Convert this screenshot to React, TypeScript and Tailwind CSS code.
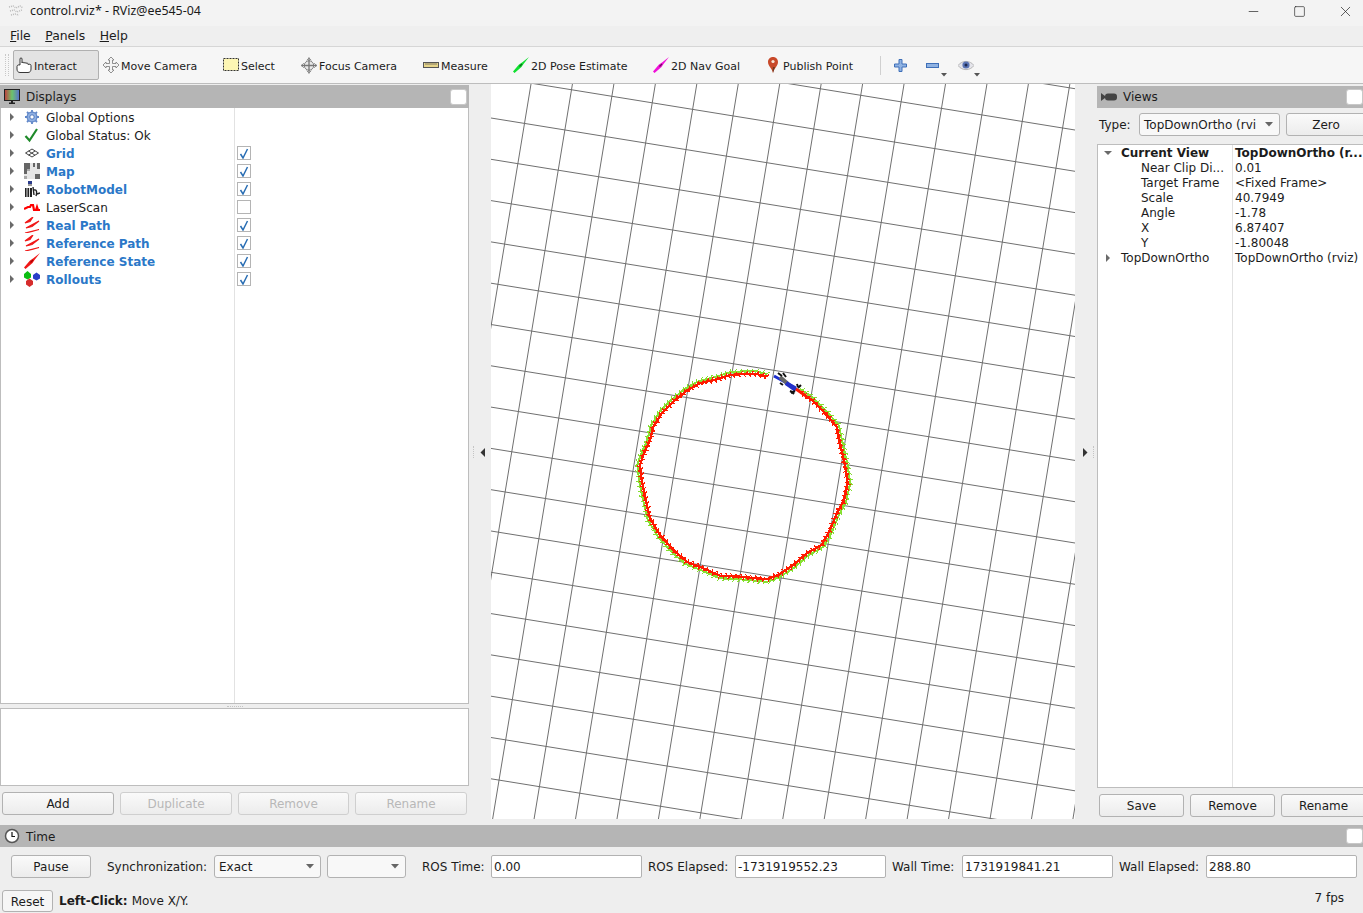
import type { ReactNode } from 'react';
import { Minus, Square, X } from 'lucide-react';

const FONT = '"DejaVu Sans", sans-serif';

// traced from the path in the viewport, in screen pixels relative to the viewport
const toView = (x: number, y: number): [number, number] => [x / 3 + 620 - 491, y / 3 + 350 - 84];
const PATH_POINTS: [number, number][] = (
  [
    [440, 80], [410, 72], [370, 72], [330, 75], [290, 88], [240, 100], [200, 122], [160, 155], [125, 190],
    [100, 230], [90, 270], [70, 315], [60, 345], [65, 390], [75, 440], [90, 505], [120, 555], [160, 600],
    [200, 635], [250, 655], [300, 677], [360, 680], [440, 688], [475, 675], [520, 645], [560, 610], [605, 585],
    [630, 540], [650, 490], [670, 455], [683, 400], [675, 345], [662, 290], [650, 230], [615, 190], [575, 150],
    [535, 122],
  ] as [number, number][]
).map(([x, y]) => toView(x, y));

const CENTER: [number, number] = [252, 392];

function ticks(points: [number, number][], size: number, offset: number) {
  let d = '';
  let n = 0;
  for (let i = 0; i < points.length - 1; i++) {
    const [ax, ay] = points[i];
    const [bx, by] = points[i + 1];
    const len = Math.hypot(bx - ax, by - ay);
    const steps = Math.max(1, Math.round(len / 2.5));
    for (let s = 0; s < steps; s++) {
      const t = s / steps;
      let x = ax + (bx - ax) * t;
      let y = ay + (by - ay) * t;
      const rx = x - CENTER[0];
      const ry = y - CENTER[1];
      const r = Math.hypot(rx, ry);
      x += (rx / r) * offset;
      y += (ry / r) * offset;
      const nx = (-(by - ay) / len) * size;
      const ny = ((bx - ax) / len) * size;
      const dir = n % 2 === 0 ? 1 : -1;
      const tx = ((bx - ax) / len) * 2;
      const ty = ((by - ay) / len) * 2;
      d += `M${x.toFixed(1)} ${y.toFixed(1)}L${(x + nx * dir - tx).toFixed(1)} ${(y + ny * dir - ty).toFixed(1)}`;
      n++;
    }
  }
  return d;
}

function line(points: [number, number][], offset: number) {
  return points
    .map(([x, y], i) => {
      const rx = x - CENTER[0];
      const ry = y - CENTER[1];
      const r = Math.hypot(rx, ry);
      return `${i ? 'L' : 'M'}${(x + (rx / r) * offset).toFixed(1)} ${(y + (ry / r) * offset).toFixed(1)}`;
    })
    .join('');
}

function Viewport() {
  const W = 584;
  const H = 735;
  const across = [];
  const down = [];
  for (let k = -3; k < 26; k++) {
    const y0 = 34 + k * 41.3;
    across.push(<line key={k} x1={0} y1={y0} x2={W} y2={y0 + W * 0.162} />);
  }
  for (let k = -3; k < 22; k++) {
    const x0 = 40 + k * 41.45;
    down.push(<line key={k} x1={x0} y1={0} x2={x0 - H * 0.165} y2={H} />);
  }
  return (
    <div className="w-[584px] h-[735px] bg-white shrink-0 overflow-hidden">
      <svg width={W} height={H} viewBox={`0 0 ${W} ${H}`} className="block">
        <g stroke="#707070" strokeWidth={1} fill="none">
          {across}
          {down}
        </g>
        <path d={line(PATH_POINTS, 2.6)} stroke="#8ae234" strokeWidth={2} fill="none" shapeRendering="crispEdges" />
        <path d={ticks(PATH_POINTS, 2.4, 3)} stroke="#84de30" strokeWidth={1} fill="none" shapeRendering="crispEdges" />
        <path d={line(PATH_POINTS, 0)} stroke="#ff1a00" strokeWidth={2.4} fill="none" shapeRendering="crispEdges" />
        <path d={ticks(PATH_POINTS, 2.8, 0)} stroke="#ff1a00" strokeWidth={1.2} fill="none" shapeRendering="crispEdges" />
        {/* robot */}
        <g transform="translate(129 266)">
          <path d="M154 26L176 38" stroke="#1d2fd0" strokeWidth={3} />
          <path d="M160 27L168 34" stroke="#666" strokeWidth={4} />
          <path d="M166 33L176 40" stroke="#2430c8" strokeWidth={4.5} />
          <path d="M158 23L162 26M163 23L166 27M177 34L178 37M170 41L174 43M172 42L174 44M160 33L163 35" stroke="#111" strokeWidth={2} />
          <path d="M181 35L178 38M171 43L175 41" stroke="#111" strokeWidth={2} />
          <path d="M176 39L186 46" stroke="#ff1a00" strokeWidth={3} />
        </g>
      </svg>
    </div>
  );
}

function Arrow({ down }: { down?: boolean }) {
  return (
    <svg width="8" height="8" viewBox="0 0 8 8" className="shrink-0">
      {down ? <path d="M0 2H8L4 6Z" fill="#6a6a6a" /> : <path d="M2 0V8L6 4Z" fill="#6a6a6a" />}
    </svg>
  );
}

function GearIcon() {
  return (
    <svg width="16" height="16" viewBox="0 0 16 16">
      <circle cx="8" cy="8" r="5" fill="#8fb0e2" stroke="#4f78c0" strokeWidth="1" />
      <circle cx="8" cy="8" r="2.2" fill="#fff" stroke="#4f78c0" />
      <path d="M8 1V3M8 13V15M1 8H3M13 8H15M3 3L4.5 4.5M11.5 11.5L13 13M3 13L4.5 11.5M11.5 4.5L13 3" stroke="#5f86c8" strokeWidth="1.8" />
    </svg>
  );
}

function CheckIcon() {
  return (
    <svg width="16" height="16" viewBox="0 0 16 16">
      <path d="M1.5 9L5.5 13.5L13 2" stroke="#1f8a2a" strokeWidth="2.2" fill="none" />
    </svg>
  );
}

function GridIcon() {
  return (
    <svg width="16" height="16" viewBox="0 0 16 16">
      <path d="M1.5 8L8 4L14.5 8L8 12ZM4.5 6L11 10.2M11 6L4.5 10.2" stroke="#444" strokeWidth="1" fill="none" />
    </svg>
  );
}

function MapIcon() {
  return (
    <svg width="16" height="16" viewBox="0 0 16 16">
      <rect width="16" height="16" fill="#e6e6e6" />
      <path d="M0 0H6V6H3V11H0ZM9 0H11V4H9ZM13 0H16V6H13ZM11 11H16V16H11Z" fill="#666" />
      <path d="M3 6H6V8H3ZM0 13H3V16H0Z" fill="#a8a8a8" />
    </svg>
  );
}

function RobotIcon() {
  return (
    <svg width="16" height="16" viewBox="0 0 16 16">
      <path d="M4 0H8V3H4Z" fill="#2b3c8c" />
      <path d="M4 3H8V5H4Z" fill="#999" />
      <path d="M1 7H8V16H1Z" fill="#222" />
      <path d="M3 7V16M5.5 7V16" stroke="#ddd" />
      <path d="M9 6L10 14M10 9C13 8 13 12 12 15M13 13L16 12" stroke="#222" strokeWidth="1.4" fill="none" />
    </svg>
  );
}

function LaserIcon() {
  return (
    <svg width="16" height="16" viewBox="0 0 16 16">
      <path d="M0 10L4 8H6L7 6H9L10 11H12L13 8L14 11H16" stroke="#f00" strokeWidth="2.2" fill="none" />
    </svg>
  );
}

function PathIcon() {
  return (
    <svg width="16" height="16" viewBox="0 0 16 16">
      <path d="M1 6L9 0L6 4.5ZM2 11L15 4L8 9.5ZM1 16L15 12.5L8 14.5Z" fill="#f01818" stroke="#f01818" strokeWidth="1.2" />
    </svg>
  );
}

function PoseIcon({ color = '#f01818', dark = '#a00' }: { color?: string; dark?: string }) {
  return (
    <svg width="16" height="16" viewBox="0 0 16 16">
      <path d="M0 14.5L6 7.5L9 5.5L16 0L10.5 7L8.5 10L1.5 16Z" fill={color} />
      <path d="M6.5 9.5L9 7" stroke={dark} strokeWidth="1.2" />
    </svg>
  );
}

function RolloutsIcon() {
  return (
    <svg width="16" height="16" viewBox="0 0 16 16">
      <path d="M0 3L3.5 0L7 3V6.5L3.5 8.5L0 6.5Z" fill="#0bbd12" />
      <path d="M9 4L12.5 1.5L16 4V7.5L12.5 9.5L9 7.5Z" fill="#2a3fc8" />
      <path d="M2 10L5.5 7.5L9 10V13.5L5.5 16L2 13.5Z" fill="#d62c2c" />
    </svg>
  );
}

function MonitorIcon() {
  return (
    <svg width="16" height="16" viewBox="0 0 16 16">
      <defs>
        <linearGradient id="scr" x1="0" y1="0" x2="1" y2="0">
          <stop offset="0" stopColor="#c43c3c" />
          <stop offset="0.5" stopColor="#6cc46c" />
          <stop offset="1" stopColor="#5a6fd0" />
        </linearGradient>
      </defs>
      <rect x="0.5" y="0.5" width="15" height="11" fill="url(#scr)" stroke="#222" />
      <path d="M5 15H11V13.5H9V12H7V13.5H5Z" fill="#222" />
    </svg>
  );
}

function ClockIcon() {
  return (
    <svg width="16" height="16" viewBox="0 0 16 16">
      <circle cx="8" cy="8" r="6.5" fill="#fff" stroke="#555" strokeWidth="1.5" />
      <path d="M8 4V8.5H11" stroke="#111" strokeWidth="1.2" fill="none" />
    </svg>
  );
}

function CameraIcon() {
  return (
    <svg width="16" height="12" viewBox="0 0 16 12">
      <path d="M0 2L4 5V7L0 10Z" fill="#444" />
      <rect x="4" y="2.5" width="12" height="7" rx="3" fill="#444" />
    </svg>
  );
}

function HandIcon() {
  return (
    <svg width="16" height="16" viewBox="0 0 16 16">
      <path d="M4 8V2C4 0.5 6 0.5 6 2V6C6 5 8 5 8 6.2C8 5.3 10 5.3 10 6.5C10 5.8 12 5.8 12 7V7.5C13 7 15 7 15 8.5V12C15 14 14 15.5 12 15.5H4C2 15.5 1 14 1 12V9.5C1 8.2 2.5 7.5 4 8Z" fill="#fff" stroke="#222" strokeWidth="0.9" />
    </svg>
  );
}

function MoveIcon() {
  return (
    <svg width="16" height="16" viewBox="0 0 16 16">
      <path d="M8 0L11 3H9.5V6.5H13V5L16 8L13 11V9.5H9.5V13H11L8 16L5 13H6.5V9.5H3V11L0 8L3 5V6.5H6.5V3H5Z" fill="#f4f4f4" stroke="#777" strokeWidth="0.8" />
    </svg>
  );
}

function SelectIcon() {
  return (
    <svg width="16" height="14" viewBox="0 0 16 14">
      <rect x="0.5" y="0.5" width="15" height="12" fill="#fdf6b4" stroke="#333" strokeDasharray="2 1" />
    </svg>
  );
}

function FocusIcon() {
  return (
    <svg width="17" height="17" viewBox="0 0 17 17">
      <circle cx="8.5" cy="8.5" r="5" fill="#e8e8e8" stroke="#777" />
      <path d="M8.5 0V17M0 8.5H17" stroke="#777" strokeWidth="1.4" />
      <path d="M6 3L8.5 0.5L11 3M6 14L8.5 16.5L11 14M3 6L0.5 8.5L3 11M14 6L16.5 8.5L14 11" stroke="#888" fill="none" />
    </svg>
  );
}

function MeasureIcon() {
  return (
    <svg width="16" height="8" viewBox="0 0 16 8">
      <rect x="0.5" y="1.5" width="15" height="5" fill="#e6d58a" stroke="#555" />
      <path d="M3 2V4M5 2V4M7 2V4M9 2V4M11 2V4M13 2V4" stroke="#555" strokeWidth="0.7" />
    </svg>
  );
}

function PinIcon() {
  return (
    <svg width="16" height="16" viewBox="0 0 16 16">
      <path d="M8 0C5 0 3 2.2 3 5C3 9 7 11 8 16C9 11 13 9 13 5C13 2.2 11 0 8 0Z" fill="#c8492a" />
      <path d="M8 10C7.5 12 7.5 14 8 16C8.5 14 9.5 12 10 10Z" fill="#6e3a20" />
      <circle cx="8" cy="4.5" r="1.6" fill="#f6e6d8" />
    </svg>
  );
}

function ToolItem({ icon, label, className }: { icon: ReactNode; label: string; className: string }) {
  return (
    <div className={`flex items-center gap-[2px] h-[30px] shrink-0 ${className}`}>
      <span className="w-[16px] h-[18px] flex items-center justify-center shrink-0">{icon}</span>
      <span className="text-[11px] text-[#1c1c1c] pt-[4px]">{label}</span>
    </div>
  );
}

function Toolbar() {
  return (
    <div className="h-[38px] shrink-0 flex items-center bg-[#f6f6f6] border-y border-t-[#d6d6d6] border-b-[#bdbdbd] pl-[5px]">
      <div className="w-[4px] h-[22px] mr-[4px] border-x border-dotted border-[#c8c8c8]" />
      <ToolItem
        icon={<HandIcon />}
        label="Interact"
        className="w-[86px] pl-[2px] bg-[#e3e3e3] border border-[#b0b0b0] rounded-[2px]"
      />
      <ToolItem icon={<MoveIcon />} label="Move Camera" className="w-[120px] pl-[4px]" />
      <ToolItem icon={<SelectIcon />} label="Select" className="w-[78px] pl-[4px]" />
      <ToolItem icon={<FocusIcon />} label="Focus Camera" className="w-[122px] pl-[4px]" />
      <ToolItem icon={<MeasureIcon />} label="Measure" className="w-[90px] pl-[4px]" />
      <ToolItem icon={<PoseIcon color="#10e030" dark="#0a6a1a" />} label="2D Pose Estimate" className="w-[140px] pl-[4px]" />
      <ToolItem icon={<PoseIcon color="#f010d8" dark="#700a60" />} label="2D Nav Goal" className="w-[115px] pl-[4px]" />
      <ToolItem icon={<PinIcon />} label="Publish Point" className="w-[116px] pl-[1px]" />
      <div className="w-px h-[19px] bg-[#d0d0d0] shrink-0" />
      <div className="relative w-[32px] h-[30px] shrink-0 flex items-center justify-center ml-[3px]">
        <svg width="13" height="13" viewBox="0 0 13 13">
          <path d="M5 0.5H8V5H12.5V8H8V12.5H5V8H0.5V5H5Z" fill="#8fb2e2" stroke="#3e6fb8" />
        </svg>
      </div>
      <div className="relative w-[33px] h-[30px] shrink-0 flex items-center justify-center">
        <svg width="13" height="5" viewBox="0 0 13 5">
          <rect x="0.5" y="0.5" width="12" height="4" fill="#8fb2e2" stroke="#3e6fb8" />
        </svg>
        <span className="absolute right-[2px] bottom-[3px]">
          <svg width="6" height="4" viewBox="0 0 6 4"><path d="M0 0H6L3 3.5Z" fill="#555" /></svg>
        </span>
      </div>
      <div className="relative w-[34px] h-[30px] shrink-0 flex items-center justify-center">
        <svg width="16" height="11" viewBox="0 0 16 11">
          <path d="M0 5.5C4 0 12 0 16 5.5C12 11 4 11 0 5.5Z" fill="#e4e4ea" stroke="#aaa" strokeWidth="0.8" />
          <circle cx="8" cy="5" r="3.6" fill="#5a74b4" />
          <circle cx="8" cy="5" r="1.5" fill="#1f2a50" />
        </svg>
        <span className="absolute right-[3px] bottom-[3px]">
          <svg width="6" height="4" viewBox="0 0 6 4"><path d="M0 0H6L3 3.5Z" fill="#555" /></svg>
        </span>
      </div>
    </div>
  );
}

function PanelHeader({ icon, title }: { icon: ReactNode; title: string }) {
  return (
    <div className="h-[23px] bg-[#b5b5b5] flex items-center pl-[4px] pr-[2px] shrink-0">
      <span className="w-[16px] flex items-center justify-center shrink-0">{icon}</span>
      <span className="ml-[6px] text-[12px] pt-px text-[#1c1c1c]">{title}</span>
      <span className="ml-auto w-[17px] h-[16px] bg-white border border-[#c8c8c8] rounded-[3px]" />
    </div>
  );
}

function Checkbox({ checked }: { checked: boolean }) {
  return (
    <span className="w-[14px] h-[14px] bg-white border border-[#b4b4b4] flex items-center justify-center">
      {checked && (
        <svg width="10" height="11" viewBox="0 0 10 11">
          <path d="M1.5 6L4 10L8.5 1" stroke="#2a6eb4" strokeWidth="1.5" fill="none" />
        </svg>
      )}
    </span>
  );
}

const DISPLAYS: { name: string; icon: ReactNode; blue?: boolean; checked?: boolean }[] = [
  { name: 'Global Options', icon: <GearIcon /> },
  { name: 'Global Status: Ok', icon: <CheckIcon /> },
  { name: 'Grid', icon: <GridIcon />, blue: true, checked: true },
  { name: 'Map', icon: <MapIcon />, blue: true, checked: true },
  { name: 'RobotModel', icon: <RobotIcon />, blue: true, checked: true },
  { name: 'LaserScan', icon: <LaserIcon />, checked: false },
  { name: 'Real Path', icon: <PathIcon />, blue: true, checked: true },
  { name: 'Reference Path', icon: <PathIcon />, blue: true, checked: true },
  { name: 'Reference State', icon: <PoseIcon />, blue: true, checked: true },
  { name: 'Rollouts', icon: <RolloutsIcon />, blue: true, checked: true },
];

function QtButton({ label, disabled, className = '' }: { label: string; disabled?: boolean; className?: string }) {
  return (
    <div
      className={`h-[23px] shrink-0 flex items-center justify-center rounded-[3px] border bg-gradient-to-b from-[#fafafa] to-[#ececec] text-[12px] ${
        disabled ? 'border-[#cfcfcf] text-[#b8b8b8]' : 'border-[#b2b2b2] text-[#1c1c1c]'
      } ${className}`}
    >
      {label}
    </div>
  );
}

function DisplaysPanel() {
  return (
    <div className="w-[469px] shrink-0 flex flex-col pt-px">
      <PanelHeader icon={<MonitorIcon />} title="Displays" />
      <div className="h-[596px] shrink-0 bg-white border-x border-b border-[#bdbdbd] relative">
        <div className="absolute left-[233px] top-0 bottom-0 w-px bg-[#e2e2e2]" />
        {DISPLAYS.map((d) => (
          <div key={d.name} className="h-[18px] flex items-center text-[12px]">
            <span className="ml-[7px] w-[8px] flex">
              <Arrow />
            </span>
            <span className="ml-[8px] w-[16px] h-[16px] flex items-center justify-center">{d.icon}</span>
            <span className={`ml-[6px] w-[190px] pt-[2px] ${d.blue ? 'font-bold text-[#2b78c8]' : 'text-[#1c1c1c]'}`}>{d.name}</span>
            {d.checked !== undefined && (
              <span className="ml-px relative">
                <Checkbox checked={d.checked} />
              </span>
            )}
          </div>
        ))}
      </div>
      <div className="h-[4px] shrink-0 flex items-center justify-center">
        <span className="w-[16px] border-t border-dotted border-[#c4c4c4]" />
      </div>
      <div className="h-[78px] shrink-0 bg-white border border-[#bdbdbd]" />
      <div className="flex gap-[6px] pl-[2px] mt-[6px]">
        <QtButton label="Add" className="w-[112px]" />
        <QtButton label="Duplicate" disabled className="w-[112px]" />
        <QtButton label="Remove" disabled className="w-[111px]" />
        <QtButton label="Rename" disabled className="w-[112px]" />
      </div>
    </div>
  );
}

function Combo({ label, className }: { label: string; className: string }) {
  return (
    <div className={`h-[23px] shrink-0 flex items-center justify-between bg-[#f8f8f8] border border-[#b2b2b2] rounded-[3px] pl-[4px] pr-[6px] text-[12px] text-[#1c1c1c] ${className}`}>
      <span className="whitespace-nowrap">{label}</span>
      <svg width="8" height="5" viewBox="0 0 8 5" className="shrink-0"><path d="M0 0H8L4 4.5Z" fill="#666" /></svg>
    </div>
  );
}

const VIEW_PROPS: [string, string][] = [
  ['Near Clip Di...', '0.01'],
  ['Target Frame', '<Fixed Frame>'],
  ['Scale', '40.7949'],
  ['Angle', '-1.78'],
  ['X', '6.87407'],
  ['Y', '-1.80048'],
];

function ViewsPanel() {
  return (
    <div className="w-[266px] shrink-0 flex flex-col pt-[2px] overflow-hidden">
      <div className="w-[280px] flex flex-col">
        <div className="h-[22px] bg-[#b5b5b5] flex items-center pl-[4px] pr-[14px] shrink-0">
          <span className="w-[16px] flex items-center justify-center"><CameraIcon /></span>
          <span className="ml-[6px] text-[12px] text-[#1c1c1c]">Views</span>
          <span className="ml-auto w-[17px] h-[16px] bg-white border border-[#c8c8c8] rounded-[3px]" />
        </div>
        <div className="flex items-center mt-[5px] pl-[2px] text-[12px] text-[#1c1c1c]">
          <span className="w-[40px]">Type:</span>
          <Combo label="TopDownOrtho (rvi" className="w-[141px]" />
          <QtButton label="Zero" className="w-[80px] ml-[6px]" />
        </div>
        <div className="mt-[8px] h-[644px] w-[275px] shrink-0 bg-white border border-[#bdbdbd] relative text-[12px] text-[#1c1c1c]">
          <div className="absolute left-[134px] top-0 bottom-0 w-px bg-[#e2e2e2]" />
          <div className="h-[15px] flex items-center font-bold">
            <span className="ml-[6px] w-[8px] flex"><Arrow down /></span>
            <span className="ml-[9px] w-[114px]">Current View</span>
            <span className="whitespace-nowrap">TopDownOrtho (r...</span>
          </div>
          {VIEW_PROPS.map(([k, v]) => (
            <div key={k} className="h-[15px] flex items-center">
              <span className="ml-[43px] w-[94px] whitespace-nowrap">{k}</span>
              <span className="whitespace-nowrap">{v}</span>
            </div>
          ))}
          <div className="h-[15px] flex items-center">
            <span className="ml-[6px] w-[8px] flex"><Arrow /></span>
            <span className="ml-[9px] w-[114px]">TopDownOrtho</span>
            <span className="whitespace-nowrap">TopDownOrtho (rviz)</span>
          </div>
        </div>
        <div className="flex mt-[6px] pl-[2px]">
          <QtButton label="Save" className="w-[85px]" />
          <QtButton label="Remove" className="w-[85px] ml-[6px]" />
          <QtButton label="Rename" className="w-[85px] ml-[6px]" />
        </div>
      </div>
    </div>
  );
}

function TimeField({ label, value, labelWidth }: { label: string; value: string; labelWidth: string }) {
  return (
    <>
      <span className={`text-[12px] pt-px text-[#1c1c1c] shrink-0 whitespace-nowrap ${labelWidth}`}>{label}</span>
      <div className="w-[151px] h-[23px] shrink-0 flex items-center bg-white border border-[#b2b2b2] rounded-[2px] pl-[2px] text-[12px] text-[#1c1c1c]">
        {value}
      </div>
    </>
  );
}

function Splitter({ side }: { side: 'left' | 'right' }) {
  return (
    <div className="w-[22px] h-[736px] shrink-0 flex items-center justify-center relative">
      <svg width="6" height="9" viewBox="0 0 6 9" className={side === 'left' ? 'ml-[6px]' : 'mr-[2px]'}>
        {side === 'left' ? <path d="M5 0V9L0.5 4.5Z" fill="#333" /> : <path d="M1 0V9L5.5 4.5Z" fill="#333" />}
      </svg>
      <span className={`absolute top-[362px] h-[12px] border-l border-dotted border-[#c4c4c4] ${side === 'left' ? 'left-[4px]' : 'right-[3px]'}`} />
    </div>
  );
}

export default function App() {
  return (
    <div className="w-[1363px] h-[913px] overflow-hidden flex flex-col bg-[#eeeeee]" style={{ fontFamily: FONT }}>
      {/* window title bar */}
      <div className="h-[26px] shrink-0 flex items-center bg-[#f3f3f3] pl-[8px] pb-[4px]">
        <svg width="16" height="12" viewBox="0 0 16 12">
          <path d="M1 2L5 1L8 3L12 1L15 3M2 6L6 5L9 7L14 5M3 10L7 9L11 10" stroke="#bbb" strokeWidth="1.5" strokeDasharray="1 1" fill="none" />
        </svg>
        <span className="ml-[6px] text-[12.4px] text-[#1a1a1a]" style={{ fontFamily: '"Noto Sans", sans-serif' }}>
          control.rviz* - RViz@ee545-04
        </span>
        <div className="ml-auto flex items-center text-[#222] translate-x-[5px]">
          <span className="w-[46px] flex justify-center"><Minus size={15} strokeWidth={1.1} /></span>
          <span className="w-[46px] flex justify-center"><Square size={13} strokeWidth={1.2} /></span>
          <span className="w-[46px] flex justify-center"><X size={17} strokeWidth={1} /></span>
        </div>
      </div>
      {/* menu */}
      <div className="h-[20px] shrink-0 flex items-center bg-[#efefef] pl-[10px] gap-[14.5px] text-[12.4px] text-[#1c1c1c]">
        <span><span className="underline">F</span>ile</span>
        <span><span className="underline">P</span>anels</span>
        <span><span className="underline">H</span>elp</span>
      </div>
      <Toolbar />
      <div className="flex h-[741px] shrink-0">
        <DisplaysPanel />
        <Splitter side="left" />
        <Viewport />
        <Splitter side="right" />
        <ViewsPanel />
      </div>
      {/* time panel */}
      <div className="flex flex-col flex-1 relative">
        <div className="w-[1378px]">
          <div className="h-[22px] bg-[#b5b5b5] flex items-center pl-[4px] pr-[15px]">
            <ClockIcon />
            <span className="ml-[6px] text-[12px] pt-px text-[#1c1c1c]">Time</span>
            <span className="ml-auto w-[17px] h-[16px] bg-white border border-[#c8c8c8] rounded-[3px]" />
          </div>
        </div>
        <div className="flex items-center mt-[8px] pl-[11px] h-[23px]">
          <QtButton label="Pause" className="w-[80px]" />
          <span className="ml-[16px] w-[107px] text-[12px] pt-px text-[#1c1c1c] shrink-0 whitespace-nowrap">Synchronization:</span>
          <Combo label="Exact" className="w-[107px]" />
          <Combo label="" className="w-[79px] ml-[6px]" />
          <span className="ml-[16px] w-[69px] text-[12px] pt-px text-[#1c1c1c] shrink-0 whitespace-nowrap">ROS Time:</span>
          <TimeField label="" value="0.00" labelWidth="w-0" />
          <span className="w-[6px] shrink-0" />
          <TimeField label="ROS Elapsed:" value="-1731919552.23" labelWidth="w-[87px]" />
          <span className="w-[6px] shrink-0" />
          <TimeField label="Wall Time:" value="1731919841.21" labelWidth="w-[70px]" />
          <span className="w-[6px] shrink-0" />
          <TimeField label="Wall Elapsed:" value="288.80" labelWidth="w-[87px]" />
        </div>
        <div className="flex items-center mt-[12px] pl-[2px] pr-[19px] h-[21px] text-[12px] text-[#1c1c1c]">
          <div className="w-[51px] h-[22px] flex items-center justify-center bg-[#f6f6f6] border border-[#b2b2b2] rounded-[3px] pt-[2px]">Reset</div>
          <span className="ml-[6px] font-bold">Left-Click:</span>
          <span className="ml-[4px]">Move X/Y.</span>
          <span className="ml-auto mb-[6px]">7 fps</span>
        </div>
      </div>
    </div>
  );
}
